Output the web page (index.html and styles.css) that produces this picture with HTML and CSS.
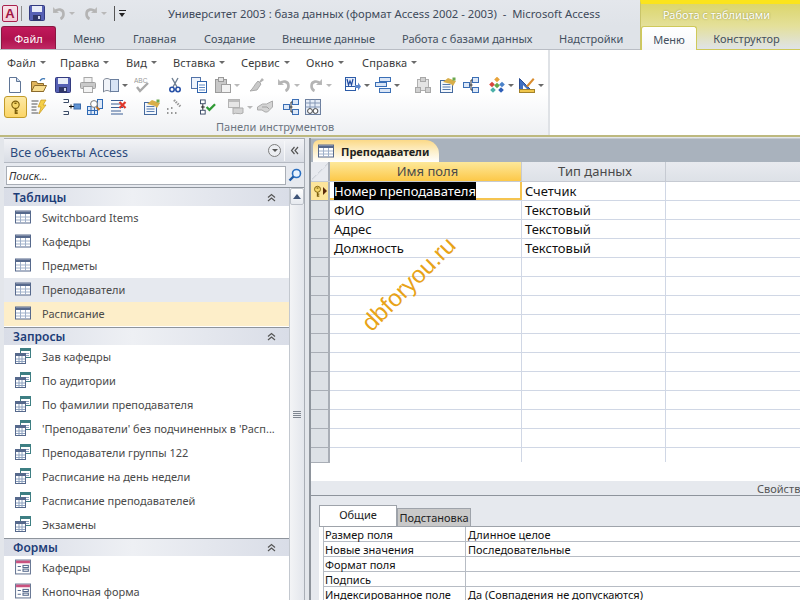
FILE: index.html
```html
<!DOCTYPE html>
<html lang="ru">
<head>
  <meta charset="UTF-8" />
  <title>Университет 2003 - Microsoft Access</title>
  <link rel="stylesheet" href="styles.css">
</head>
<body>
  <svg class="defs" aria-hidden="true">
    <symbol id="i-table" viewBox="0 0 16 13">
      <rect x="0.5" y="0.5" width="15" height="12" fill="#fff" stroke="#56698c"/>
      <rect x="1" y="1" width="14" height="2.5" fill="#56698c"/>
      <path d="M1 6.5h14M1 9.5h14M5.5 3.5v9M10.5 3.5v9" stroke="#9fb0c9" fill="none"/>
    </symbol>
    <symbol id="i-query" viewBox="0 0 16 16">
      <rect x="5.5" y="0.5" width="10" height="9" fill="#fff" stroke="#3e7f83"/>
      <rect x="6" y="1" width="9" height="2" fill="#3e7f83"/>
      <rect x="0.5" y="5.5" width="10" height="10" fill="#fff" stroke="#56698c"/>
      <rect x="1" y="6" width="9" height="2" fill="#56698c"/>
      <path d="M1 11h9M1 13.5h9M4 8v7M7 8v7M11 5.5h3M11 7.5h3" stroke="#8ea2bf" fill="none"/>
    </symbol>
    <symbol id="i-form" viewBox="0 0 15 14">
      <rect x="0.5" y="0.5" width="14" height="13" fill="#fff" stroke="#6b7a96"/>
      <rect x="1" y="1" width="13" height="2.5" fill="#c9517f"/>
      <path d="M2.5 6.5h3M2.5 10h3" stroke="#56698c" fill="none"/>
      <rect x="7.5" y="5.5" width="5" height="2" fill="#fff" stroke="#56698c"/>
      <rect x="7.5" y="9" width="5" height="2" fill="#fff" stroke="#56698c"/>
    </symbol>
    <symbol id="i-key" viewBox="2 0 12 16">
      <circle cx="8" cy="5" r="4" fill="#f6d76a" stroke="#7d5f0c" stroke-width="1.2"/>
      <rect x="6.8" y="2.6" width="2.4" height="1.6" fill="#7d5f0c"/>
      <path d="M8 9v6M8 11.5h2.4M8 14.2h2.4" stroke="#7d5f0c" stroke-width="1.8" fill="none"/>
    </symbol>
    <symbol id="i-chev" viewBox="0 0 9 9">
      <path d="M1 4.5l3.5-3 3.5 3M1 8l3.5-3 3.5 3" stroke="#555" stroke-width="1.2" fill="none"/>
    </symbol>
    <symbol id="i-new" viewBox="0 0 16 16">
      <path d="M2.5 0.5h7l4 4v11h-11z" fill="#fdfdff" stroke="#5f7596"/>
      <path d="M9.5 0.5v4h4" fill="#cfdcf0" stroke="#5f7596"/>
    </symbol>
    <symbol id="i-open" viewBox="0 0 16 16">
      <path d="M0.5 14.5v-10h5l1 2h6v8z" fill="#e0b45a" stroke="#8b6a2c"/>
      <path d="M0.5 14.5l3-6h12l-3 6z" fill="#f7dc8e" stroke="#8b6a2c"/>
      <path d="M9 4c1-2 3-3 5-2" stroke="#3f78b5" stroke-width="1.4" fill="none"/>
    </symbol>
    <symbol id="i-save" viewBox="0 0 16 16">
      <rect x="0.5" y="0.5" width="15" height="15" rx="1" fill="#5660b4" stroke="#333b80"/>
      <rect x="3" y="1" width="10" height="6" fill="#e9edf8"/>
      <rect x="4" y="10" width="8" height="5.5" fill="#2f3566"/>
      <rect x="9" y="11" width="2" height="3" fill="#cfd3ea"/>
    </symbol>
    <symbol id="i-print" viewBox="0 0 16 16">
      <rect x="4" y="0.5" width="8" height="5" fill="#f1f1f1" stroke="#a8a8a8"/>
      <rect x="0.5" y="5.5" width="15" height="6" rx="1" fill="#c9c9c9" stroke="#a0a0a0"/>
      <rect x="3.5" y="9.5" width="9" height="6" fill="#f4f4f4" stroke="#a8a8a8"/>
    </symbol>
    <symbol id="i-preview" viewBox="0 0 16 16">
      <path d="M0.5 3c2-2 5-2 7 0v12c-2-2-5-2-7 0z" fill="#f1f4f9" stroke="#7c8594"/>
      <rect x="7.5" y="2.5" width="8" height="12" fill="#d8e4f5" stroke="#6b7f9e"/>
    </symbol>
    <symbol id="i-spell" viewBox="0 0 16 16">
      <text x="0" y="6" font-size="6.5" font-family="Liberation Sans, sans-serif" fill="#9a9a9a">ABC</text>
      <path d="M3 10l3 4 8-8" stroke="#a9a9a9" stroke-width="2.4" fill="none"/>
    </symbol>
    <symbol id="i-cut" viewBox="0 0 12 16">
      <path d="M3 1l5 9M9 1l-5 9" stroke="#6f7f92" stroke-width="1.4" fill="none"/>
      <circle cx="3" cy="12.5" r="2.2" fill="none" stroke="#2952a8" stroke-width="1.6"/>
      <circle cx="9" cy="12.5" r="2.2" fill="none" stroke="#2952a8" stroke-width="1.6"/>
    </symbol>
    <symbol id="i-copy" viewBox="0 0 16 16">
      <rect x="0.5" y="0.5" width="9" height="11" fill="#eef3fb" stroke="#5273a8"/>
      <rect x="6.5" y="4.5" width="9" height="11" fill="#fff" stroke="#2f63ad"/>
      <path d="M8 8h6M8 10.5h6M8 13h6" stroke="#5f8ac6" fill="none"/>
    </symbol>
    <symbol id="i-paste" viewBox="0 0 16 16">
      <rect x="0.5" y="2.5" width="11" height="13" fill="#c8c8c8" stroke="#9a9a9a"/>
      <rect x="3.5" y="0.5" width="5" height="4" fill="#e2e2e2" stroke="#9a9a9a"/>
      <rect x="6.5" y="7.5" width="9" height="8" fill="#f2f2f2" stroke="#a0a0a0"/>
    </symbol>
    <symbol id="i-brush" viewBox="0 0 16 16">
      <path d="M10 5l3-4 2 2-4 3z" fill="#b2b2b2"/>
      <path d="M9 4l3 3-4 6-7 1c3-2 4-6 8-10z" fill="#c9c9c9" stroke="#ababab"/>
    </symbol>
    <symbol id="i-undo" viewBox="0 0 14 14">
      <path d="M1 1v6h6" fill="#bbb"/>
      <path d="M2.5 6c3-4 9-3 9 2 0 2-1 4-3 5" stroke="#b4b4b4" stroke-width="2.6" fill="none"/>
    </symbol>
    <symbol id="i-redo" viewBox="0 0 14 14">
      <path d="M13 1v6h-6" fill="#bbb"/>
      <path d="M11.5 6c-3-4-9-3-9 2 0 2 1 4 3 5" stroke="#b4b4b4" stroke-width="2.6" fill="none"/>
    </symbol>
    <symbol id="i-word" viewBox="0 0 16 16">
      <rect x="0.5" y="0.5" width="10" height="13" fill="#fff" stroke="#2d5ca8"/>
      <rect x="0.5" y="0.5" width="10" height="9" fill="#e7eefa" stroke="#2d5ca8"/>
      <path d="M2 2l1.5 6L5 4l1.5 4L8 2" stroke="#1f4aa0" stroke-width="1.2" fill="none"/>
      <path d="M10 8h3V5.5l3 4-3 4V11h-3z" fill="#5c86c9"/>
    </symbol>
    <symbol id="i-analyze" viewBox="0 0 16 16">
      <rect x="4.5" y="0.5" width="11" height="4" fill="#dbe6f6" stroke="#3b6fb6"/>
      <rect x="0.5" y="5.5" width="11" height="4" fill="#dbe6f6" stroke="#3b6fb6"/>
      <rect x="4.5" y="11.5" width="11" height="4" fill="#dbe6f6" stroke="#3b6fb6"/>
    </symbol>
    <symbol id="i-relgray" viewBox="0 0 16 16">
      <rect x="2.5" y="2.5" width="11" height="11" fill="#e4e4e4" stroke="#b0b0b0"/>
      <rect x="0.5" y="10.5" width="5" height="5" fill="#d0d0d0" stroke="#a8a8a8"/>
      <rect x="10.5" y="10.5" width="5" height="5" fill="#d0d0d0" stroke="#a8a8a8"/>
      <rect x="5.5" y="0.5" width="5" height="4" fill="#d0d0d0" stroke="#a8a8a8"/>
    </symbol>
    <symbol id="i-props" viewBox="0 0 16 16">
      <rect x="0.5" y="3.5" width="12" height="12" fill="#f3f7fc" stroke="#456a9f"/>
      <path d="M2.5 7.5h8M2.5 10h8M2.5 12.5h8" stroke="#567bb0" fill="none"/>
      <path d="M3 5l5-4 5 2 3 1-3 5-2-2z" fill="#d8ae4a"/>
      <rect x="12.5" y="0.5" width="3" height="3" fill="#6aa84f"/>
    </symbol>
    <symbol id="i-rel" viewBox="0 0 16 16">
      <rect x="0.5" y="5.5" width="6" height="5" fill="#dce8f8" stroke="#3c6fb5"/>
      <rect x="9.5" y="0.5" width="6" height="5" fill="#dce8f8" stroke="#3c6fb5"/>
      <rect x="9.5" y="10.5" width="6" height="5" fill="#dce8f8" stroke="#3c6fb5"/>
      <path d="M6.5 8h3M8 3v10M8 3h1.5M8 13h1.5" stroke="#333" fill="none"/>
    </symbol>
    <symbol id="i-objects" viewBox="0 0 16 16">
      <rect x="6" y="0.5" width="4" height="4" fill="#e8a33a" transform="rotate(45 8 2.5)"/>
      <rect x="1" y="5.5" width="4" height="4" fill="#d9453d" transform="rotate(45 3 7.5)"/>
      <rect x="11" y="5.5" width="4" height="4" fill="#4b82c9" transform="rotate(45 13 7.5)"/>
      <rect x="6" y="6.5" width="4" height="4" fill="#66a84a" transform="rotate(45 8 8.5)"/>
      <rect x="2" y="11" width="4" height="4" fill="#4bb0a8" transform="rotate(45 4 13)"/>
      <rect x="10" y="11" width="4" height="4" fill="#2f5fb8" transform="rotate(45 12 13)"/>
    </symbol>
    <symbol id="i-design" viewBox="0 0 16 16">
      <path d="M0.5 1.5v11h11z" fill="#3f6fc1" stroke="#2b4d92"/>
      <path d="M4 8v4h4z" fill="#fff"/>
      <rect x="0.5" y="12.5" width="15" height="3" fill="#f0c64c" stroke="#a3822a"/>
      <path d="M7 9l7-8 1.5 1.5L9 10z" fill="#d98c2e"/>
    </symbol>
    <symbol id="i-builder" viewBox="0 0 16 16">
      <path d="M0.5 2h7M0.5 5h6M0.5 8h5M0.5 11h5M0.5 14h7" stroke="#555" fill="none"/>
      <path d="M10 1h5l-3 5h3l-7 9 2-7H7z" fill="#f4cf47" stroke="#c99a1e" stroke-width="0.7"/>
    </symbol>
    <symbol id="i-insert" viewBox="0 0 18 16">
      <path d="M0.5 0.5h5v3h-5M0.5 12.5h5v3h-5" fill="none" stroke="#3a4a66"/>
      <rect x="11" y="5" width="6.5" height="5" fill="#5f93d3" stroke="#3d6cab"/>
      <path d="M6 7.5h5M8 5.5v4" stroke="#111" fill="none"/>
    </symbol>
    <symbol id="i-indexes" viewBox="0 0 16 16">
      <rect x="0.5" y="7.5" width="10" height="8" fill="#dfe9f7" stroke="#2e69b4"/>
      <path d="M0.5 11.5h10M4 7.5v8M7.5 7.5v8" stroke="#2e69b4" fill="none"/>
      <rect x="10.5" y="0.5" width="5" height="9" fill="#dfe9f7" stroke="#2e69b4"/>
      <circle cx="7" cy="5" r="3.4" fill="#fff" stroke="#7a7a7a"/>
      <path d="M9.5 8l3 3" stroke="#c9741f" stroke-width="2"/>
    </symbol>
    <symbol id="i-delete" viewBox="0 0 17 16">
      <path d="M0.5 1.5h12M0.5 5h10M0.5 8.5h12M0.5 12h10M0.5 15h12" stroke="#3a5f95" fill="none"/>
      <path d="M9 3l6 6M15 3l-6 6" stroke="#e0372b" stroke-width="2.2"/>
    </symbol>
    <symbol id="i-dots" viewBox="0 0 16 16">
      <path d="M8 1l7 7" stroke="#9a9a9a" stroke-width="2.4" stroke-dasharray="1.5 1"/>
      <path d="M1 14h1.5M5 14h1.5M9 14h1.5M5 9h1.5M1 10h1.5" stroke="#777" stroke-width="1.6"/>
    </symbol>
    <symbol id="i-test" viewBox="0 0 17 16">
      <rect x="0.5" y="0.5" width="5" height="4" fill="#fff" stroke="#3a4a66"/>
      <rect x="0.5" y="11.5" width="5" height="4" fill="#fff" stroke="#3a4a66"/>
      <path d="M3 5v6M1 8h4" stroke="#111" fill="none"/>
      <path d="M7 8l3 3 6-6" stroke="#2f9a35" stroke-width="2.4" fill="none"/>
    </symbol>
    <symbol id="i-subdata" viewBox="0 0 16 16">
      <rect x="0.5" y="0.5" width="11" height="8" fill="#e6e6e6" stroke="#b4b4b4"/>
      <rect x="1" y="1" width="10" height="2" fill="#bdbdbd"/>
      <path d="M5 9l10 0v5c-3 2-7-1-10 1z" fill="#d3d3d3" stroke="#adadad"/>
    </symbol>
    <symbol id="i-hands" viewBox="0 0 16 16">
      <path d="M0.5 8l5-3h4l6-3v6l-5 5H8l-3-2H0.5z" fill="#d4d4d4" stroke="#ababab"/>
      <path d="M5 8h5l2 2" stroke="#a0a0a0" fill="none"/>
    </symbol>
    <symbol id="i-link" viewBox="0 0 16 16">
      <rect x="0.5" y="0.5" width="15" height="15" fill="#e5ecf7" stroke="#6c7f9e"/>
      <path d="M0.5 4h15M0.5 8h15M5 0.5v15M10 0.5v15" stroke="#8396b5" fill="none"/>
      <circle cx="5" cy="12" r="2.4" fill="#fff" stroke="#444"/>
      <circle cx="10.5" cy="12" r="2.4" fill="#fff" stroke="#444"/>
    </symbol>
  </svg>

  <div class="app">
    <header class="titlebar">
      <div class="qat">
        <span class="app-logo">A</span>
        <span class="qat-sep"></span>
        <svg class="ic16 qat-save"><use href="#i-save"/></svg>
        <svg class="ic14 g7"><use href="#i-undo"/></svg>
        <span class="caret caret-light"></span>
        <svg class="ic14 g9"><use href="#i-redo"/></svg>
        <span class="caret caret-light"></span>
        <span class="qat-sep qat-sep-2"></span>
        <span class="qat-more"></span>
      </div>
      <div class="window-title">Университет 2003 : база данных (формат Access 2002 - 2003) &nbsp;-&nbsp; Microsoft Access</div>
      <div class="context-head">Работа с таблицами</div>
    </header>

    <nav class="tabs">
      <div class="tab tab-file">Файл</div>
      <div class="tab t-menu">Меню</div>
      <div class="tab t-home">Главная</div>
      <div class="tab t-create">Создание</div>
      <div class="tab t-ext">Внешние данные</div>
      <div class="tab t-db">Работа с базами данных</div>
      <div class="tab t-addin">Надстройки</div>
      <div class="context-tabs">
        <div class="tab tab-active">Меню</div>
        <div class="tab t-design">Конструктор</div>
      </div>
    </nav>

    <section class="ribbon">
      <div class="ribbon-group">
        <div class="menu-row">
          <span class="menu-item m-file">Файл<i class="caret"></i></span>
          <span class="menu-item m-edit">Правка<i class="caret"></i></span>
          <span class="menu-item m-view">Вид<i class="caret"></i></span>
          <span class="menu-item m-ins">Вставка<i class="caret"></i></span>
          <span class="menu-item m-svc">Сервис<i class="caret"></i></span>
          <span class="menu-item m-win">Окно<i class="caret"></i></span>
          <span class="menu-item">Справка<i class="caret"></i></span>
        </div>
        <div class="tool-row tool-row-1">
          <svg class="ic16"><use href="#i-new"/></svg>
          <svg class="ic16 g8"><use href="#i-open"/></svg>
          <svg class="ic16 g8"><use href="#i-save"/></svg>
          <svg class="ic16 g9"><use href="#i-print"/></svg>
          <svg class="ic16 g7"><use href="#i-preview"/></svg><span class="caret"></span>
          <svg class="ic16 g6"><use href="#i-spell"/></svg>
          <svg class="ic16 g17"><use href="#i-cut"/></svg>
          <svg class="ic16 g8"><use href="#i-copy"/></svg>
          <svg class="ic16 g8"><use href="#i-paste"/></svg><span class="caret caret-light"></span>
          <svg class="ic16 g9"><use href="#i-brush"/></svg>
          <svg class="ic14 g12"><use href="#i-undo"/></svg><span class="caret caret-light"></span>
          <svg class="ic14 g9"><use href="#i-redo"/></svg><span class="caret caret-light"></span>
          <svg class="ic16 g13"><use href="#i-word"/></svg><span class="caret"></span>
          <svg class="ic16 g5"><use href="#i-analyze"/></svg><span class="caret"></span>
          <svg class="ic16 g15"><use href="#i-relgray"/></svg>
          <svg class="ic16 g9"><use href="#i-props"/></svg>
          <svg class="ic16 g7"><use href="#i-rel"/></svg>
          <svg class="ic16 g10"><use href="#i-objects"/></svg><span class="caret"></span>
          <svg class="ic16 g5"><use href="#i-design"/></svg><span class="caret"></span>
        </div>
        <div class="tool-row tool-row-2">
          <span class="key-btn"><svg class="key-ic"><use href="#i-key"/></svg></span>
          <svg class="ic16 g4"><use href="#i-builder"/></svg>
          <svg class="ic18 g16"><use href="#i-insert"/></svg>
          <svg class="ic16 g6"><use href="#i-indexes"/></svg>
          <svg class="ic18 g7"><use href="#i-delete"/></svg>
          <svg class="ic16 g16"><use href="#i-props"/></svg>
          <svg class="ic16 g6"><use href="#i-dots"/></svg>
          <svg class="ic16 g18"><use href="#i-test"/></svg>
          <svg class="ic16 g12"><use href="#i-subdata"/></svg><span class="caret caret-light"></span>
          <svg class="ic16 g4"><use href="#i-hands"/></svg>
          <svg class="ic16 g10"><use href="#i-rel"/></svg>
          <svg class="ic16 g6"><use href="#i-link"/></svg>
        </div>
        <div class="group-label">Панели инструментов</div>
      </div>
    </section>

    <div class="workspace">
      <aside class="nav-pane">
        <div class="nav-head">
          <span class="nav-title">Все объекты Access</span>
          <span class="nav-drop"></span>
          <span class="nav-collapse"><svg class="chev-left"><use href="#i-chev"/></svg></span>
        </div>
        <div class="nav-search">
          <div class="search-box">Поиск...</div>
          <svg class="search-icon" viewBox="0 0 14 14"><circle cx="8.5" cy="5.5" r="4" fill="#e8f3ff" stroke="#2a6fc0" stroke-width="1.6"/><path d="M5.5 8.5L1.5 12.5" stroke="#1d5aa5" stroke-width="2.4"/></svg>
        </div>
        <div class="nav-body">
          <div class="nav-list">
            <div class="nav-section">Таблицы<svg class="chev"><use href="#i-chev"/></svg></div>
            <div class="nav-item"><svg class="item-ic"><use href="#i-table"/></svg>Switchboard Items</div>
            <div class="nav-item"><svg class="item-ic"><use href="#i-table"/></svg>Кафедры</div>
            <div class="nav-item"><svg class="item-ic"><use href="#i-table"/></svg>Предметы</div>
            <div class="nav-item is-open"><svg class="item-ic"><use href="#i-table"/></svg>Преподаватели</div>
            <div class="nav-item is-current"><svg class="item-ic"><use href="#i-table"/></svg>Расписание</div>
            <div class="nav-section">Запросы<svg class="chev"><use href="#i-chev"/></svg></div>
            <div class="nav-item"><svg class="item-ic"><use href="#i-query"/></svg>Зав кафедры</div>
            <div class="nav-item"><svg class="item-ic"><use href="#i-query"/></svg>По аудитории</div>
            <div class="nav-item"><svg class="item-ic"><use href="#i-query"/></svg>По фамилии преподавателя</div>
            <div class="nav-item"><svg class="item-ic"><use href="#i-query"/></svg>'Преподаватели' без подчиненных в 'Расп...</div>
            <div class="nav-item"><svg class="item-ic"><use href="#i-query"/></svg>Преподаватели группы 122</div>
            <div class="nav-item"><svg class="item-ic"><use href="#i-query"/></svg>Расписание на день недели</div>
            <div class="nav-item"><svg class="item-ic"><use href="#i-query"/></svg>Расписание преподавателей</div>
            <div class="nav-item"><svg class="item-ic"><use href="#i-query"/></svg>Экзамены</div>
            <div class="nav-section">Формы<svg class="chev"><use href="#i-chev"/></svg></div>
            <div class="nav-item"><svg class="item-ic"><use href="#i-form"/></svg>Кафедры</div>
            <div class="nav-item"><svg class="item-ic"><use href="#i-form"/></svg>Кнопочная форма</div>
          </div>
          <div class="scrollbar">
            <div class="scroll-btn"></div>
            <div class="scroll-thumb"></div>
          </div>
        </div>
      </aside>

      <main class="doc">
        <div class="doc-tabs">
          <div class="doc-tab"><svg class="item-ic"><use href="#i-table"/></svg>Преподаватели</div>
        </div>
        <div class="grid">
          <div class="grid-head">
            <div class="sel sel-corner"></div>
            <div class="c-name head-active">Имя поля</div>
            <div class="c-type">Тип данных</div>
            <div class="c-desc"></div>
          </div>
          <div class="grid-row">
            <div class="sel sel-current"><svg class="sel-key"><use href="#i-key"/></svg><span class="sel-arrow"></span></div>
            <div class="c-name cell-active"><span class="selected">Номер преподавателя</span></div>
            <div class="c-type">Счетчик</div>
            <div class="c-desc"></div>
          </div>
          <div class="grid-row">
            <div class="sel"></div><div class="c-name">ФИО</div><div class="c-type">Текстовый</div><div class="c-desc"></div>
          </div>
          <div class="grid-row">
            <div class="sel"></div><div class="c-name">Адрес</div><div class="c-type">Текстовый</div><div class="c-desc"></div>
          </div>
          <div class="grid-row">
            <div class="sel"></div><div class="c-name">Должность</div><div class="c-type">Текстовый</div><div class="c-desc"></div>
          </div>
          <div class="grid-row"><div class="sel"></div><div class="c-name"></div><div class="c-type"></div><div class="c-desc"></div></div>
          <div class="grid-row"><div class="sel"></div><div class="c-name"></div><div class="c-type"></div><div class="c-desc"></div></div>
          <div class="grid-row"><div class="sel"></div><div class="c-name"></div><div class="c-type"></div><div class="c-desc"></div></div>
          <div class="grid-row"><div class="sel"></div><div class="c-name"></div><div class="c-type"></div><div class="c-desc"></div></div>
          <div class="grid-row"><div class="sel"></div><div class="c-name"></div><div class="c-type"></div><div class="c-desc"></div></div>
          <div class="grid-row"><div class="sel"></div><div class="c-name"></div><div class="c-type"></div><div class="c-desc"></div></div>
          <div class="grid-row"><div class="sel"></div><div class="c-name"></div><div class="c-type"></div><div class="c-desc"></div></div>
          <div class="grid-row"><div class="sel"></div><div class="c-name"></div><div class="c-type"></div><div class="c-desc"></div></div>
          <div class="grid-row"><div class="sel"></div><div class="c-name"></div><div class="c-type"></div><div class="c-desc"></div></div>
          <div class="grid-row"><div class="sel"></div><div class="c-name"></div><div class="c-type"></div><div class="c-desc"></div></div>
          <div class="grid-row grid-row-last"><div class="sel"></div><div class="c-name"></div><div class="c-type"></div><div class="c-desc"></div></div>
          <div class="watermark">dbforyou.ru</div>
        </div>
        <div class="props-bar">Свойства поля</div>
        <div class="props">
          <div class="prop-tabs">
            <div class="prop-tab prop-tab-on">Общие</div>
            <div class="prop-tab">Подстановка</div>
          </div>
          <div class="prop-table">
            <div class="prop-row"><div class="prop-name">Размер поля</div><div class="prop-val">Длинное целое</div></div>
            <div class="prop-row"><div class="prop-name">Новые значения</div><div class="prop-val">Последовательные</div></div>
            <div class="prop-row"><div class="prop-name">Формат поля</div><div class="prop-val"></div></div>
            <div class="prop-row"><div class="prop-name">Подпись</div><div class="prop-val"></div></div>
            <div class="prop-row"><div class="prop-name">Индексированное поле</div><div class="prop-val">Да (Совпадения не допускаются)</div></div>
          </div>
        </div>
      </main>
    </div>
  </div>
</body>
</html>
```
FILE: styles.css
```css
* {
  box-sizing: border-box;
}

html,
body {
  margin: 0;
  height: 100%;
  overflow: hidden;
}

body {
  font-family: "Noto Sans", "Open Sans", sans-serif;
  font-size: 11px;
  color: #3b3b3b;
  background: #d6dbe2;
}

.defs {
  position: absolute;
  width: 0;
  height: 0;
}

.app {
  width: 800px;
  height: 600px;
  display: flex;
  flex-direction: column;
  overflow: hidden;
}

svg {
  flex: none;
  display: block;
}

.ic16 { width: 16px; height: 16px; }
.ic14 { width: 14px; height: 14px; }
.ic18 { width: 18px; height: 16px; }

.g4 { margin-left: 4px; }
.g5 { margin-left: 5px; }
.g6 { margin-left: 6px; }
.g7 { margin-left: 7px; }
.g8 { margin-left: 8px; }
.g9 { margin-left: 9px; }
.g10 { margin-left: 10px; }
.g12 { margin-left: 12px; }
.g13 { margin-left: 13px; }
.g15 { margin-left: 15px; }
.g16 { margin-left: 16px; }
.g17 { margin-left: 17px; }
.g18 { margin-left: 18px; }

.caret {
  display: inline-block;
  flex: none;
  width: 0;
  height: 0;
  margin-left: 3px;
  border-left: 3px solid transparent;
  border-right: 3px solid transparent;
  border-top: 3px solid #6a6a6a;
}

.caret-light {
  border-top-color: #b9b9b9;
}

/* Заголовок окна */
.titlebar {
  height: 26px;
  display: flex;
  align-items: center;
  background: linear-gradient(#e4e7ec, #dfe3e8);
}

.qat {
  display: flex;
  align-items: center;
  flex: none;
  width: 168px;
  padding-left: 2px;
}

.app-logo {
  width: 16px;
  height: 17px;
  border: 1px solid #a8204c;
  border-radius: 2px;
  background: linear-gradient(#f7e4ea, #f3c9d6);
  color: #a01543;
  font-family: "Liberation Sans", sans-serif;
  font-weight: bold;
  font-size: 13px;
  line-height: 15px;
  text-align: center;
}

.qat-sep {
  width: 1px;
  height: 15px;
  margin-left: 3px;
  background: #8d8d8d;
}

.qat-sep-2 {
  margin-left: 7px;
  background: #555;
}

.qat-save {
  margin-left: 7px;
}

.qat-more {
  width: 7px;
  height: 7px;
  margin-left: 4px;
  border-top: 1px solid #222;
  position: relative;
}

.qat-more::after {
  content: "";
  position: absolute;
  top: 2px;
  left: 0;
  border-left: 3.5px solid transparent;
  border-right: 3.5px solid transparent;
  border-top: 4px solid #222;
}

.window-title {
  flex: 1;
  font-size: 11.25px;
  color: #3e4a5a;
  white-space: nowrap;
}

.context-head {
  width: 160px;
  height: 26px;
  flex: none;
  padding: 3px 8px 0 0;
  text-align: center;
  color: #fff;
  line-height: 16px;
  text-shadow: 0 0 2px #8a8a40;
  border-top: 4px solid #fbe41c;
  background: linear-gradient(#dcd66c, #e4e09a);
  border-left: 1px solid #c9c46a;
}

/* Вкладки ленты */
.tabs {
  height: 24px;
  display: flex;
  align-items: flex-start;
  background: #dfe3e8;
  border-bottom: 1px solid #b9bdc4;
}

.tab {
  height: 23px;
  line-height: 25px;
  text-align: center;
  white-space: nowrap;
  color: #44505f;
}

.tab-file {
  width: 55px;
  margin-left: 1px;
  border: 1px solid #8a1740;
  border-bottom: none;
  border-radius: 3px 3px 0 0;
  background: linear-gradient(#c2195b, #b0124e 55%, #c02a64);
  color: #fff;
  line-height: 23px;
}

.t-menu { width: 32px; margin-left: 17px; }
.t-home { width: 42px; margin-left: 28px; }
.t-create { width: 50px; margin-left: 29px; }
.t-ext { width: 91px; margin-left: 28px; }
.t-db { width: 129px; margin-left: 29px; }
.t-addin { width: 64px; margin-left: 28px; }

.context-tabs {
  width: 160px;
  height: 24px;
  margin-left: auto;
  display: flex;
  background: linear-gradient(#e4e09a, #dfe3e8);
  border-left: 1px solid #c9c46a;
  border-bottom: 1px solid #cfc95a;
}

.tab-active {
  width: 56px;
  height: 24px;
  background: linear-gradient(#fff, #f6f7f9);
  border: 1px solid #cfc95a;
  border-bottom: none;
  border-radius: 3px 3px 0 0;
}

.t-design {
  flex: 1;
  padding-right: 4px;
}

/* Лента */
.ribbon {
  height: 87px;
  display: flex;
  background: #fff;
  border-bottom: 2px solid #bdb97f;
}

.ribbon-group {
  width: 550px;
  padding-top: 4px;
  background: linear-gradient(#fff 50%, #eef0f3);
  border-right: 2px solid #dfe2e6;
  display: flex;
  flex-direction: column;
}

.menu-row {
  display: flex;
  height: 17px;
  padding-left: 7px;
  line-height: 17px;
  white-space: nowrap;
}

.menu-item {
  display: flex;
  align-items: center;
  color: #3b3b3b;
  letter-spacing: 0.1px;
}

.menu-item .caret {
  margin-left: 4px;
}

.m-file { width: 53px; }
.m-edit { width: 66px; }
.m-view { width: 47px; }
.m-ins { width: 68px; }
.m-svc { width: 65px; }
.m-win { width: 56px; }

.tool-row {
  display: flex;
  align-items: center;
}

.tool-row-1 {
  height: 24px;
  margin-top: 2px;
  padding-left: 7px;
}

.tool-row-2 {
  height: 22px;
  margin-top: -1px;
  padding-left: 4px;
}

.key-btn {
  width: 23px;
  height: 22px;
  display: flex;
  align-items: center;
  justify-content: center;
  border: 1px solid #c29b29;
  border-radius: 3px;
  background: linear-gradient(#fde9a5, #fbd567);
}

.key-ic {
  width: 11px;
  height: 15px;
}

.group-label {
  height: 16px;
  line-height: 18px;
  padding-left: 216px;
  color: #6b7480;
}

/* Рабочая область */
.workspace {
  flex: 1;
  display: flex;
  min-height: 0;
  padding-top: 1px;
  background: #e3e6eb;
}

.nav-pane {
  width: 301px;
  margin: 0 4px;
  flex: none;
  display: flex;
  flex-direction: column;
  background: #e6e9ef;
  border-top: 1px solid #a9aeb6;
  border-right: 1px solid #a9aeb6;
}

.nav-head {
  height: 24px;
  flex: none;
  display: flex;
  align-items: center;
  padding-left: 6px;
  background: linear-gradient(#f2f3f6, #d9dde5);
  border-bottom: 1px solid #b4b9c2;
}

.nav-title {
  flex: 1;
  padding-top: 3px;
  font-size: 12.5px;
  color: #2b4a7c;
}

.nav-drop {
  width: 13px;
  height: 13px;
  border: 1px solid #7d7d7d;
  border-radius: 50%;
  position: relative;
  background: #eceef2;
}

.nav-drop::after {
  content: "";
  position: absolute;
  left: 2.5px;
  top: 4px;
  border-left: 3px solid transparent;
  border-right: 3px solid transparent;
  border-top: 3px solid #555;
}

.nav-collapse {
  width: 20px;
  height: 20px;
  margin-left: 3px;
  border-left: 1px solid #f6f7f9;
  display: flex;
  align-items: center;
  justify-content: center;
}

.chev-left {
  width: 9px;
  height: 9px;
  transform: rotate(-90deg);
}

.nav-search {
  height: 24px;
  flex: none;
  display: flex;
  align-items: center;
  padding-left: 2px;
  background: #e6e9ef;
}

.search-box {
  width: 280px;
  height: 19px;
  padding-left: 2px;
  background: #fff;
  border: 1px solid #a9aeb6;
  font-style: italic;
  line-height: 17px;
  color: #333;
}

.search-icon {
  width: 14px;
  height: 14px;
  margin-left: 2px;
}

.nav-body {
  flex: 1;
  min-height: 0;
  display: flex;
  background: #fff;
  border-top: 1px solid #8e949c;
}

.nav-list {
  width: 285px;
  flex: none;
  overflow: hidden;
}

.nav-section {
  height: 18px;
  padding: 0 13px 0 9px;
  display: flex;
  align-items: center;
  justify-content: space-between;
  font-weight: 600;
  font-size: 12px;
  color: #1d3d78;
  background: linear-gradient(90deg, #d9dde7, #eef0f4 45%, #d9dde7);
  border-top: 1px solid #8e949c;
  margin-top: 1px;
}

.nav-section:first-child {
  margin-top: 0;
  border-top: none;
}

.chev {
  width: 9px;
  height: 9px;
}

.nav-item {
  height: 24px;
  padding-bottom: 2px;
  display: flex;
  align-items: center;
  white-space: nowrap;
  overflow: hidden;
  color: #4a4a4a;
}

.item-ic {
  width: 16px;
  height: 16px;
  margin: 0 11px;
  flex: none;
}

.is-open { background: #e6e9ef; }
.is-current { background: #fdeec9; }

.scrollbar {
  width: 15px;
  flex: none;
  background: #f1f2f5;
  border-left: 1px solid #c3c8cf;
}

.scroll-btn {
  height: 17px;
  background: linear-gradient(#fff, #e6e9ef);
  border: 1px solid #bcc1c9;
  border-radius: 2px;
  position: relative;
}

.scroll-btn::after {
  content: "";
  position: absolute;
  left: 2px;
  top: 5px;
  border-left: 4px solid transparent;
  border-right: 4px solid transparent;
  border-bottom: 5px solid #3f5478;
}

.scroll-thumb {
  height: 400px;
  background:
    repeating-linear-gradient(#7f8690 0 1px, transparent 1px 2px) center 206px / 8px 7px no-repeat,
    linear-gradient(90deg, #f3f4f6, #e3e6ec);
}

/* Документ */
.doc {
  flex: 1;
  min-width: 0;
  display: flex;
  flex-direction: column;
  background: #e6e9ee;
  border-left: 2px solid #8e949c;
}

.doc-tabs {
  height: 24px;
  flex: none;
  display: flex;
  align-items: flex-end;
  background: #a9b2bd;
  border-top: 1px solid #c4c9d0;
}

.doc-tab {
  width: 126px;
  height: 22px;
  display: flex;
  align-items: center;
  margin-left: 2px;
  font-weight: 700;
  color: #1f1f1f;
  background: linear-gradient(#fbd987, #fdefc8 50%, #fff);
  border-radius: 6px 14px 0 0;
}

.doc-tab .item-ic {
  margin: 0 7px 0 5px;
}

.grid {
  height: 319px;
  flex: none;
  position: relative;
  background: #fff;
  overflow: hidden;
  font-size: 13px;
  color: #111;
}

.grid-head,
.grid-row {
  display: flex;
  height: 19px;
  line-height: 18px;
}

.grid-head {
  height: 20px;
  line-height: 19px;
  background: linear-gradient(#e8eaef, #dde1e7);
  color: #4a4a4a;
  text-align: center;
  border-bottom: 1px solid #c6cad2;
}

.grid-row {
  border-bottom: 1px solid #d0d7e5;
}

.grid-row-last {
  height: 14px;
  border-bottom: none;
}

.sel {
  width: 19px;
  flex: none;
  margin-bottom: -1px;
  background: #dde1e6;
  border-right: 2px solid #a9aeb6;
  border-bottom: 1px solid #a9aeb6;
  display: flex;
  align-items: center;
}

.sel-corner {
  background: linear-gradient(135deg, #e8eaef 50%, #cfd3da 50%, #e8eaef 56%);
  border-bottom: none;
  margin-bottom: 0;
}

.sel-current {
  background: #fde59b;
}

.sel-key {
  width: 9px;
  height: 13px;
  margin-left: 2px;
}

.sel-arrow {
  border-top: 4px solid transparent;
  border-bottom: 4px solid transparent;
  border-left: 4px solid #5b2a0a;
  margin-left: 1px;
}

.c-name {
  width: 192px;
  flex: none;
  padding-left: 4px;
  border-right: 1px solid #d0d7e5;
}

.c-type {
  width: 144px;
  flex: none;
  padding-left: 3px;
  border-right: 1px solid #d0d7e5;
}

.c-desc {
  flex: 1;
}

.head-active {
  background: linear-gradient(#fde89a, #fcc848);
  border-right: 1px solid #c6cad2;
}

.grid-head .c-type {
  border-right: 1px solid #c6cad2;
}

.cell-active {
  border-right: 2px solid #f5c450;
  border-bottom: 2px solid #f5c450;
}

.selected {
  display: inline-block;
  height: 18px;
  background: #000;
  color: #fff;
}

.watermark {
  position: absolute;
  left: 37px;
  top: 108px;
  font-family: "Liberation Sans", sans-serif;
  font-size: 24px;
  color: #e8a317;
  transform: rotate(-45deg);
  white-space: nowrap;
}

.props-bar {
  height: 15px;
  flex: none;
  background: #e6e9ee;
  border-bottom: 1px solid #8e949c;
  overflow: hidden;
  white-space: nowrap;
  padding-left: 446px;
  line-height: 16px;
  color: #555;
}

.props {
  flex: 1;
  min-height: 0;
  padding: 9px 0 0 8px;
  background: #e6e9ee;
}

.prop-tabs {
  display: flex;
  align-items: flex-end;
  height: 21px;
}

.prop-tab {
  width: 74px;
  height: 18px;
  background: #c9c9c9;
  border: 1px solid #9ea3aa;
  border-bottom: none;
  line-height: 18px;
  text-align: center;
  color: #222;
}

.prop-tab-on {
  width: 78px;
  height: 21px;
  background: #fff;
  line-height: 18px;
}

.prop-table {
  padding-left: 4px;
  background: #fff;
  border-top: 1px solid #9ea3aa;
  color: #111;
}

.prop-row {
  display: flex;
  height: 15px;
  line-height: 15px;
  border-bottom: 1px solid #b7bcc4;
  border-left: 1px solid #b7bcc4;
  white-space: nowrap;
}

.prop-name {
  width: 142px;
  flex: none;
  padding-left: 1px;
  border-right: 1px solid #b7bcc4;
}

.prop-val {
  flex: 1;
  padding-left: 2px;
}
```
